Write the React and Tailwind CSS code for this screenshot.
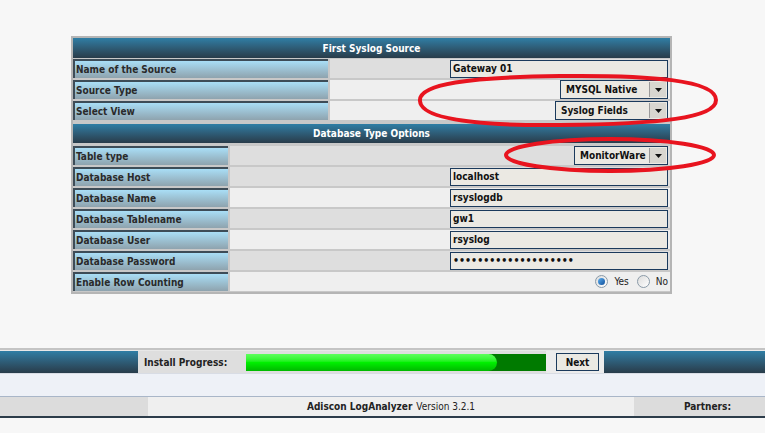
import React from 'react';

const font = { fontFamily: '"DejaVu Sans Condensed", "DejaVu Sans", Verdana, sans-serif' };

const Label = ({ children }) => (
  <div className="h-[19px] flex items-center pl-[1px] pt-[1px] border-t-2 border-l-2 border-[#3d4c57] bg-gradient-to-b from-[#a9def6] to-[#8ea3ae] text-[10px] font-bold text-[#2a2a2a] leading-none whitespace-nowrap">
    {children}
  </div>
);

const Header = ({ children, h }) => (
  <div style={{ height: h }} className="flex items-center justify-center bg-gradient-to-b from-[#2f7ea5] to-[#283c4a] text-white text-[10px] font-bold">
    {children}
  </div>
);

const TextBox = ({ value, dots }) => (
  <div className={`w-[218px] h-[18px] flex items-center pl-[2px] bg-[#ebe9e3] border border-[#1b3a5c] font-bold text-[#111] leading-none ${dots ? 'text-[10.5px]' : 'text-[10px]'}`}>
    {value}
  </div>
);

const Select = ({ value, w }) => (
  <div style={{ width: w }} className="h-[19px] flex items-center bg-[#ebe9e3] border border-[#1b3a5c] text-[10px] font-bold text-[#111] leading-none">
    <span className="flex-1 pl-[5px]">{value}</span>
    <span className="w-[17px] h-[15px] mr-[1px] flex items-center justify-center bg-[#d8d6d0] border-l border-[#9a9a9a]">
      <svg width="7" height="4" viewBox="0 0 7 4"><path d="M0 0h7L3.5 4z" fill="#111" /></svg>
    </span>
  </div>
);

const Row = ({ label, labelW, shade, top = 2, children }) => (
  <div className="flex gap-[2px]" style={{ marginTop: top }}>
    <div style={{ width: labelW }} className="shrink-0">
      <Label>{label}</Label>
    </div>
    <div className={`flex-1 h-[19px] flex items-center justify-end pr-[2px] ${shade ? 'bg-[#dedede]' : 'bg-[#efefef]'}`}>
      {children}
    </div>
  </div>
);

const Radio = ({ checked }) => (
  <span className="w-[13px] h-[13px] rounded-full border border-[#8a9aa8] bg-gradient-to-br from-[#dcdcdc] to-white flex items-center justify-center">
    {checked && <span className="w-[7px] h-[7px] rounded-full bg-gradient-to-br from-[#5fb0f0] to-[#0d4f9a]" />}
  </span>
);

export default function App() {
  return (
    <div style={font} className="relative w-[765px] h-[433px] bg-[#f7f7f7] overflow-hidden">
      <div className="pt-[36px] pl-[71px]">
        <div className="w-[601px] border-2 border-[#b5b5b5] bg-[#c8c8c8] flex flex-col pb-[1px]">
          <Header h={20}>First Syslog Source</Header>
          <Row label="Name of the Source" labelW={255} shade top={1}>
            <TextBox value="Gateway 01" />
          </Row>
          <Row label="Source Type" labelW={255}>
            <Select value="MYSQL Native" w={108} />
          </Row>
          <Row label="Select View" labelW={255}>
            <Select value="Syslog Fields" w={113} />
          </Row>
          <div className="mt-[4px]">
            <Header h={19}>Database Type Options</Header>
          </div>
          <Row label="Table type" labelW={155} shade top={3}>
            <Select value="MonitorWare" w={94} />
          </Row>
          <Row label="Database Host" labelW={155} shade>
            <TextBox value="localhost" />
          </Row>
          <Row label="Database Name" labelW={155}>
            <TextBox value="rsyslogdb" />
          </Row>
          <Row label="Database Tablename" labelW={155} shade>
            <TextBox value="gw1" />
          </Row>
          <Row label="Database User" labelW={155}>
            <TextBox value="rsyslog" />
          </Row>
          <Row label="Database Password" labelW={155} shade>
            <TextBox value="••••••••••••••••••••" dots />
          </Row>
          <Row label="Enable Row Counting" labelW={155}>
            <div className="flex items-center text-[10px] text-[#222]">
              <Radio checked />
              <span className="ml-[6px] mr-[8px]">Yes</span>
              <Radio />
              <span className="ml-[6px]">No</span>
            </div>
          </Row>
        </div>
      </div>

      <div className="mt-[54px] border-t-2 border-[#c4c4c4]">
        <div className="flex h-[23px] border-t border-[#e8e8e8]">
          <div className="w-[138px] bg-gradient-to-b from-[#2f7ea5] to-[#283c4a]" />
          <div className="w-[108px] bg-[#dedede] flex items-center pl-[6px] text-[10px] font-bold text-[#222]">
            Install Progress:
          </div>
          <div className="w-[300px] bg-[#dedede] flex items-center">
            <div className="w-[300px] h-[17px] bg-[#007a00] flex">
              <div className="w-[251px] h-full rounded-r-full rounded-l-[3px] bg-gradient-to-b from-[#5cff5c] via-[#00f000] to-[#00b800]" />
            </div>
          </div>
          <div className="w-[58px] bg-[#ececec] flex items-center pl-[10px]">
            <div className="w-[43px] h-[18px] bg-[#ebe9e3] border border-[#1b3a5c] flex items-center justify-center text-[10px] font-bold text-[#111]">
              Next
            </div>
          </div>
          <div className="flex-1 bg-gradient-to-b from-[#2f7ea5] to-[#283c4a]" />
        </div>
        <div className="h-[24px] bg-[#eef1f7] border-t border-[#d8dce4] border-b border-b-[#a9b6c8]" />
        <div className="flex h-[19px] text-[10px] text-[#222]">
          <div className="w-[148px] bg-[#dcdcdc]" />
          <div className="w-[486px] bg-[#efefef] flex items-center justify-center">
            <span className="font-bold">Adiscon LogAnalyzer</span>
            <span className="ml-[4px]">Version 3.2.1</span>
          </div>
          <div className="flex-1 bg-[#dcdcdc] flex items-center justify-center pl-[16px] font-bold">Partners:</div>
        </div>
        <div className="h-[2px] bg-[#2c3c4a]" />
      </div>

      <svg className="absolute left-0 top-0 pointer-events-none" width="765" height="433">
        <path
          d="M420 101 C418 84 470 77 560 76 C650 75 716 80 716 100 C716 118 660 124 560 125 C470 126 421 118 420 101 Z"
          fill="none"
          stroke="#e8141f"
          strokeWidth="4"
        />
        <ellipse cx="610" cy="155" rx="104" ry="16" fill="none" stroke="#e8141f" strokeWidth="4" />
      </svg>
    </div>
  );
}
